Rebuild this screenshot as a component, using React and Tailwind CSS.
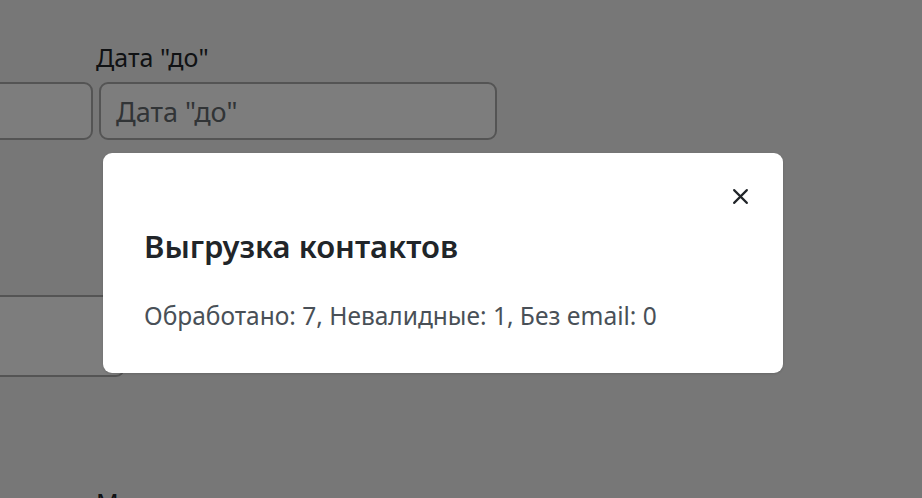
import React from 'react'

// Export dialog shown over the contacts filter form
const CloseIcon = () => (
  <svg width="17" height="17" viewBox="0 0 16 16" fill="none" stroke="currentColor" strokeWidth="2" strokeLinecap="round">
    <path d="M2 2l12 12M14 2L2 14" />
  </svg>
)

const Field = ({ label, placeholder, className = '' }) => (
  <div className={className}>
    <div className="ml-[-3px] h-[38px] text-[25px] leading-[38px] text-[#212529]">{label}</div>
    <div className="mt-[6px] h-[58px] rounded-[9px] border-2 border-[#a9a9a9] bg-[#fbfbfb] px-[15px] text-[27px] leading-[56px] text-[#63686d]">
      {placeholder}
    </div>
  </div>
)

export default function App() {
  return (
    <div className="relative h-[498px] w-[922px] overflow-hidden bg-[#efefef]" style={{ fontFamily: '"Noto Sans", "Open Sans", sans-serif' }}>
      {/* Filter form behind the dialog */}
      <div className="pt-[38px]">
        <div className="ml-[-300px] flex gap-[6px]">
          <Field label="" placeholder="" className="w-[393px]" />
          <Field label='Дата "до"' placeholder='Дата "до"' className="w-[398px]" />
        </div>
        <div className="ml-[-300px] mt-[155px] h-[82px] w-[425px] rounded-[9px] border-2 border-[#a9a9a9] bg-[#fbfbfb]" />
        <div className="ml-[96px] mt-[110px] text-[25px] leading-[30px] text-[#212529]">Менеджер</div>
      </div>

      {/* Backdrop */}
      <div className="absolute inset-0 bg-black/50" />

      {/* Dialog */}
      <div className="absolute left-[103px] top-[153px] w-[680px] rounded-[9px] bg-white pb-[40px] pl-[42px] pr-[32px] pt-[32px] shadow-sm">
        <div className="flex justify-end">
          <button className="flex h-[22px] w-[22px] items-center justify-center text-[#212529]" aria-label="Закрыть">
            <CloseIcon />
          </button>
        </div>
        <h5 className="ml-[-1px] mt-[20px] text-[31px] font-semibold leading-[38px] text-[#212529]">Выгрузка контактов</h5>
        <p className="ml-[-1px] mt-[34px] text-[24.5px] leading-[34px] text-[#495057]">Обработано: 7, Невалидные: 1, Без email: 0</p>
      </div>
    </div>
  )
}
